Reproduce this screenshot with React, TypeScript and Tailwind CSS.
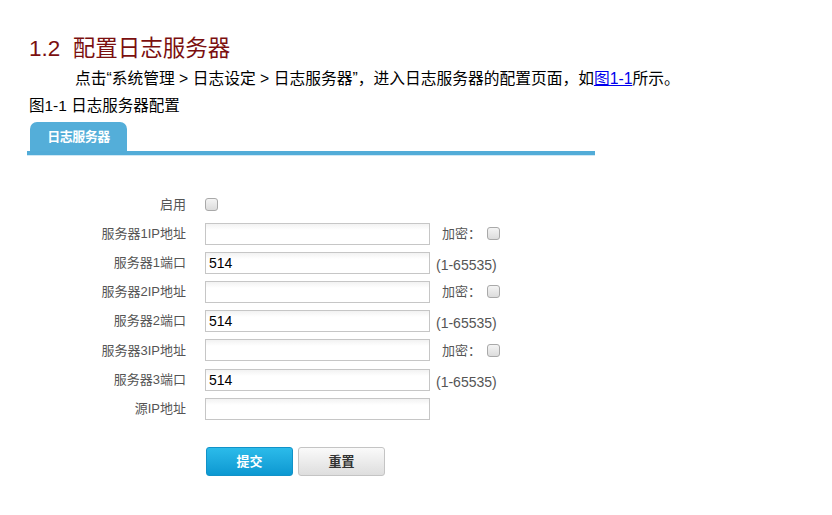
import React from 'react';

const rows = [
  { label: '服务器1IP地址', value: '', extra: 'enc' },
  { label: '服务器1端口', value: '514', extra: 'range' },
  { label: '服务器2IP地址', value: '', extra: 'enc' },
  { label: '服务器2端口', value: '514', extra: 'range' },
  { label: '服务器3IP地址', value: '', extra: 'enc' },
  { label: '服务器3端口', value: '514', extra: 'range' },
  { label: '源IP地址', value: '', extra: '' },
];

function Box() {
  return (
    <span className="inline-block w-[13px] h-[13px] rounded-[3px] border border-[#a9a9a9] bg-gradient-to-b from-[#f4f4f4] to-[#dcdcdc]" />
  );
}

export default function App() {
  return (
    <div
      className="w-[832px] h-[515px] bg-white text-black pl-[29px] pt-[35px]"
      style={{ fontFamily: '"Liberation Sans", "Noto Sans CJK SC", sans-serif' }}
    >
      <h1 className="text-[22.5px] leading-[28px] text-[#7b0f0f]">1.2&nbsp; 配置日志服务器</h1>
      <p className="text-[15.75px] leading-[20px] mt-[6px] pl-[46px]">
        点击“系统管理 &gt; 日志设定 &gt; 日志服务器”，进入日志服务器的配置页面，如
        <a className="text-[#0000ee] underline">图1-1</a>所示。
      </p>
      <p className="text-[15.5px] leading-[20px] mt-[7px]">图1-1 日志服务器配置</p>

      <div className="mt-[6px] w-[568px] -ml-[2px]">
        <div className="flex pl-[3px]">
          <div className="w-[97px] h-[29px] rounded-t-[7px] bg-[#54aed9] text-white text-[13px] font-bold flex items-center justify-center tracking-[-0.5px]">
            日志服务器
          </div>
        </div>
        <div className="h-[5px] bg-[#52acd8] border-b border-[#cfe8f5]" />
      </div>

      <div className="mt-[34px] text-[13px] text-[#555]">
        <div className="flex items-center h-[29px]">
          <div className="w-[157px] text-right">启用</div>
          <div className="ml-[19px] flex items-center"><Box /></div>
        </div>
        {rows.map((r) => (
          <div key={r.label} className="flex items-center h-[29.2px]">
            <div className="w-[157px] text-right">{r.label}</div>
            <div className="ml-[19px] w-[225px] h-[22px] border border-[#c6c6c6] bg-gradient-to-b from-[#f2f2f2] to-white to-[30%] px-[3px] text-[14px] leading-[20px] text-black">
              {r.value}
            </div>
            {r.extra === 'enc' && (
              <div className="ml-[12px] flex items-center gap-[6px]">
                <span>加密：</span>
                <Box />
              </div>
            )}
            {r.extra === 'range' && <div className="ml-[6px] mt-[5px] text-[14px]">(1-65535)</div>}
          </div>
        ))}
        <div className="flex mt-[24px] ml-[177px] gap-[5px]">
          <button className="w-[87px] h-[29px] rounded-[3px] border border-[#1192c8] bg-gradient-to-b from-[#2bbbea] to-[#0b98d1] text-white text-[13px] font-bold">
            提交
          </button>
          <button className="w-[87px] h-[29px] rounded-[3px] border border-[#c4c4c4] bg-gradient-to-b from-[#fafafa] to-[#dedede] text-[#333] text-[13px] font-bold">
            重置
          </button>
        </div>
      </div>
    </div>
  );
}
